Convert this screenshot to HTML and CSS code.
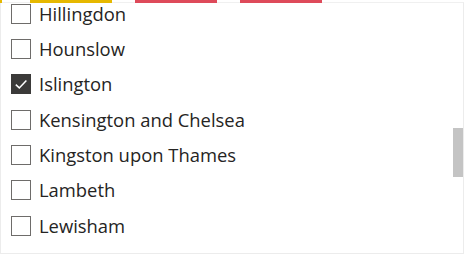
FILE: index.html
```html
<!DOCTYPE html>
<html>
<head>
<meta charset="utf-8">
<link rel="stylesheet" href="styles.css">
</head>
<body>
<div class="tabs">
  <span class="tab yellow edge"></span>
  <span class="tab yellow main"></span>
  <span class="tab red"></span>
  <span class="tab red"></span>
</div>
<div class="panel">
  <ul class="list">
    <li class="row"><span class="box"></span><span class="label">Hillingdon</span></li>
    <li class="row"><span class="box"></span><span class="label">Hounslow</span></li>
    <li class="row"><span class="box checked"><svg viewBox="0 0 20 20" width="20" height="20"><path d="M4.8 10.6 L8.3 13.9 L15.4 6.4" fill="none" stroke="#fff" stroke-width="1.5"/></svg></span><span class="label">Islington</span></li>
    <li class="row"><span class="box"></span><span class="label">Kensington and Chelsea</span></li>
    <li class="row"><span class="box"></span><span class="label">Kingston upon Thames</span></li>
    <li class="row"><span class="box"></span><span class="label">Lambeth</span></li>
    <li class="row"><span class="box"></span><span class="label">Lewisham</span></li>
  </ul>
  <div class="thumb"></div>
</div>
</body>
</html>
```
FILE: styles.css
```css
html, body {
  margin: 0;
  padding: 0;
  background: #fff;
  width: 466px;
  height: 258px;
  overflow: hidden;
}
.tabs {
  display: flex;
  height: 3px;
  position: relative;
  z-index: 2;
}
.tab { display: block; height: 3px; }
.tab.edge { width: 2px; margin-right: 28px; }
.tab.main { width: 82px; margin-right: 23px; }
.tab.red { width: 82px; margin-right: 23px; }
.yellow { background: #e6b800; }
.red { background: #de4a5a; }
.panel {
  position: relative;
  width: 462px;
  height: 250px;
  border: 1px solid #ececec;
  border-top-color: #f0f0f0;
  box-sizing: content-box;
  margin-top: -1px;
  overflow: hidden;
}
.list {
  list-style: none;
  margin: -7px 0 0 0;
  padding: 0;
}
.row {
  display: flex;
  align-items: center;
  height: 35.33px;
  padding-left: 10px;
}
.box {
  width: 18px;
  height: 18px;
  border: 1px solid #6e6c6a;
  background: #fff;
  margin-right: 8px;
  flex: none;
  position: relative;
}
.box.checked {
  background: #3b3a39;
  border-color: #3b3a39;
}
.box svg { position: absolute; left: -1px; top: -1px; }
.label {
  font-family: "Open Sans", "Noto Sans", sans-serif;
  font-size: 18.4px;
  color: #252423;
  line-height: 20px;
}
.thumb {
  position: absolute;
  right: 0;
  top: 125px;
  width: 10px;
  height: 49px;
  background: #c4c4c4;
}
```
